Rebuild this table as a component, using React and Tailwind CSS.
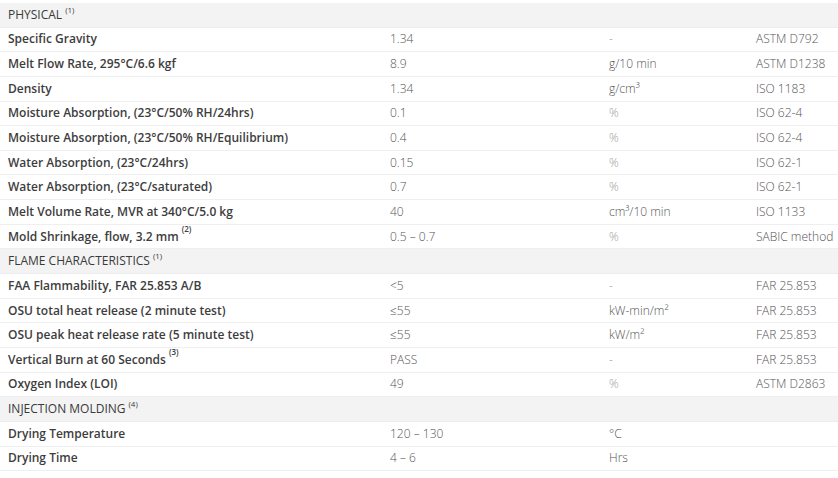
const sections = [
  {
    title: "PHYSICAL",
    note: "(1)",
    rows: [
      ["Specific Gravity", null, "1.34", "-", "ASTM D792"],
      ["Melt Flow Rate, 295°C/6.6 kgf", null, "8.9", "g/10 min", "ASTM D1238"],
      ["Density", null, "1.34", "g/cm³", "ISO 1183"],
      ["Moisture Absorption, (23°C/50% RH/24hrs)", null, "0.1", "%", "ISO 62-4"],
      ["Moisture Absorption, (23°C/50% RH/Equilibrium)", null, "0.4", "%", "ISO 62-4"],
      ["Water Absorption, (23°C/24hrs)", null, "0.15", "%", "ISO 62-1"],
      ["Water Absorption, (23°C/saturated)", null, "0.7", "%", "ISO 62-1"],
      ["Melt Volume Rate, MVR at 340°C/5.0 kg", null, "40", "cm³/10 min", "ISO 1133"],
      ["Mold Shrinkage, flow, 3.2 mm", "(2)", "0.5 – 0.7", "%", "SABIC method"],
    ],
  },
  {
    title: "FLAME CHARACTERISTICS",
    note: "(1)",
    rows: [
      ["FAA Flammability, FAR 25.853 A/B", null, "<5", "-", "FAR 25.853"],
      ["OSU total heat release (2 minute test)", null, "≤55", "kW-min/m²", "FAR 25.853"],
      ["OSU peak heat release rate (5 minute test)", null, "≤55", "kW/m²", "FAR 25.853"],
      ["Vertical Burn at 60 Seconds", "(3)", "PASS", "-", "FAR 25.853"],
      ["Oxygen Index (LOI)", null, "49", "%", "ASTM D2863"],
    ],
  },
  {
    title: "INJECTION MOLDING",
    note: "(4)",
    rows: [
      ["Drying Temperature", null, "120 – 130", "°C", ""],
      ["Drying Time", null, "4 – 6", "Hrs", ""],
    ],
  },
];

const grid = "grid grid-cols-[382px_219px_147px_1fr] items-center h-[24.65px]";

function Note({ children }) {
  return <sup className="relative -top-[3px] ml-[3px] text-[8px] align-top leading-none">{children}</sup>;
}

export default function App() {
  return (
    <div className="w-[838px] h-[478px] bg-white pt-[3px] text-[12px] text-[#444]" style={{ fontFamily: '"Open Sans", "Liberation Sans", sans-serif' }}>
      {sections.map((s) => (
        <div key={s.title}>
          <div className={`${grid} bg-[#f3f3f3] border-b border-[#ececec]`}>
            <div className="pl-2 text-[12px] text-[#3a3a3a] leading-none">
              {s.title}
              <Note>{s.note}</Note>
            </div>
          </div>
          {s.rows.map(([label, note, value, unit, method]) => (
            <div key={label} className={`${grid} border-b border-[#efefef]`}>
              <div className="pl-2 font-semibold text-[#3d3d3d] whitespace-nowrap">
                {label}
                {note && <Note>{note}</Note>}
              </div>
              <div className="pl-2 font-light text-[#555]">{value}</div>
              <div className={`pl-2 font-light ${unit === "-" || unit === "%" ? "text-[#999]" : "text-[#555]"}`}>{unit}</div>
              <div className="pl-2 font-light text-[#555] whitespace-nowrap">{method}</div>
            </div>
          ))}
        </div>
      ))}
    </div>
  );
}
